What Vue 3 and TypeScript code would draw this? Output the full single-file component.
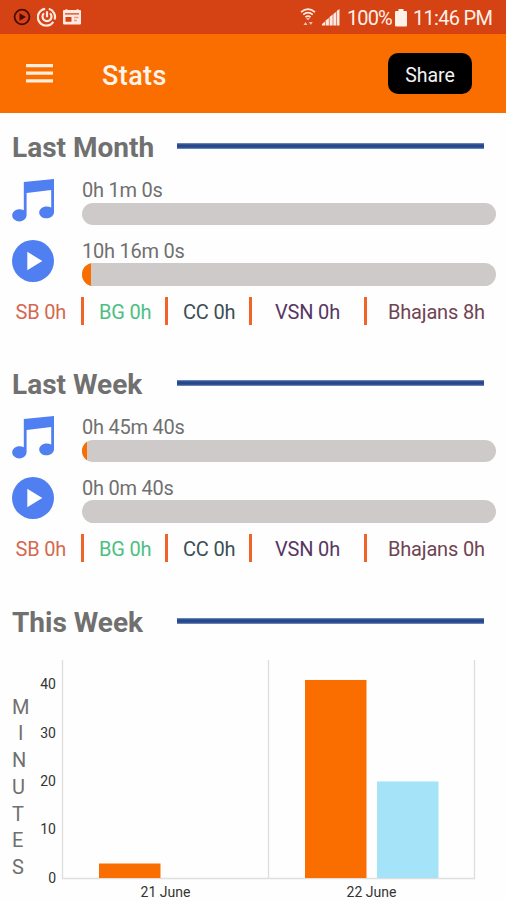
<script setup lang="ts">
interface Metric {
  kind: 'music' | 'play'
  time: string
  percent: number
}
interface Category {
  label: string
  tone: string
}
interface Period {
  title: string
  metrics: Metric[]
  categories: Category[]
}

const categories = (bhajans: string): Category[] => [
  { label: 'SB 0h', tone: 'sb' },
  { label: 'BG 0h', tone: 'bg' },
  { label: 'CC 0h', tone: 'cc' },
  { label: 'VSN 0h', tone: 'vsn' },
  { label: `Bhajans ${bhajans}`, tone: 'bhajans' },
]

const periods: Period[] = [
  {
    title: 'Last Month',
    metrics: [
      { kind: 'music', time: '0h 1m 0s', percent: 0 },
      { kind: 'play', time: '10h 16m 0s', percent: 2.1 },
    ],
    categories: categories('8h'),
  },
  {
    title: 'Last Week',
    metrics: [
      { kind: 'music', time: '0h 45m 40s', percent: 1.1 },
      { kind: 'play', time: '0h 0m 40s', percent: 0 },
    ],
    categories: categories('0h'),
  },
]

const axisLetters = 'MINUTES'.split('')
const ticks = [0, 10, 20, 30, 40]
const days = [
  { label: '21 June', listened: 3, watched: 0 },
  { label: '22 June', listened: 41, watched: 20 },
]

const baseline = 218
const unit = 4.83
const dayWidth = 206
const plotLeft = 27
</script>

<template>
  <main class="screen">
    <div class="status">
      <div class="status-left">
        <svg class="s-play" viewBox="0 0 18 18"><circle cx="9" cy="9" r="7.4" /><path d="M6.5 5.2 13 9l-6.5 3.8z" /></svg>
        <svg class="s-power" viewBox="0 0 20 20">
          <path d="M11.8 1.800A8.400 8.400 0 0 1 17.600 12.500M16.300 14.800A8.400 8.400 0 1 1 8.200 1.800M7 6.200a4.500 4.500 0 1 0 6 0M10 4.300v6" />
        </svg>
        <svg class="s-news" viewBox="0 0 18 16">
          <path class="sheet" d="M1 1h1.500V.3h2V1h9V.3h2V1H17q1 0 1 1v12.500q0 1-1 1H1q-1 0-1-1V2q0-1 1-1z" /><path class="cut" d="M2 4.300h14v1.200H2zM2.500 8h6v4.800h-6z" /><path class="fold" d="M11 8.500h4.500M11 11.500h3" />
        </svg>
      </div>
      <div class="status-right">
        <svg class="s-wifi" viewBox="0 0 16 18">
          <path class="arc" d="M1 4.200Q8-1.800 15 4.200M3.200 6.700Q8 2.700 12.800 6.700M5.400 9.100Q8 7.100 10.600 9.100" />
          <path class="dot" d="M6 10h4L8 12.500zM3.500 17l2-3 2 3zM8.800 14h4l-2 3z" />
        </svg>
        <svg class="s-signal" viewBox="0 0 18 18"><path d="M0 17.500v-1.500l3-2.500v4zM3.600 17.500v-5L6.900 10v7.500zM7.500 17.500V9l3.200-2.400v10.900zM11.300 17.500V6l2.800-2v13.500zM14.700 17.500V3L17.500 1v16.500z" /></svg>
        <span class="charge">100%</span>
        <svg class="s-battery" viewBox="0 0 12 18"><path d="M3.500 0h5v2H11q1 0 1 1v13.500q0 1-1 1H1q-1 0-1-1V3q0-1 1-1h2.500z" /></svg>
        <span class="clock">11:46 PM</span>
      </div>
    </div>

    <header class="appbar">
      <svg class="menu" viewBox="0 0 27 19"><path d="M0 1.600h27M0 9.200h27M0 16.800h27" /></svg>
      <h1>Stats</h1>
      <button class="share" type="button">Share</button>
    </header>

    <section v-for="period in periods" :key="period.title" class="period">
      <div class="heading">
        <h2>{{ period.title }}</h2>
        <span class="rule"></span>
      </div>
      <div v-for="metric in period.metrics" :key="metric.kind" class="metric">
        <svg v-if="metric.kind === 'music'" class="icon" viewBox="0 0 42 43">
          <path d="M11.800 3 42 0V33c0 3.600-3.200 6.300-7.400 6.300-4.100 0-7.400-2.600-7.400-5.900s3.300-6 7.400-6c1.700 0 3.300.4 4.600 1.200V11L14.600 14v21.800c0 3.800-3.200 6.600-7 6.600-4.200 0-7.400-2.700-7.400-6.100s3.300-6.100 7.400-6.100c1.600 0 3 .3 4.200 1z" />
        </svg>
        <svg v-else class="icon" viewBox="0 0 42 43">
          <circle cx="21" cy="21" r="21" /><path class="triangle" d="M15.300 11.800v18.400L30.300 21z" />
        </svg>
        <div class="progress">
          <span class="time">{{ metric.time }}</span>
          <div class="track"><div class="fill" :style="{ width: metric.percent + '%' }"></div></div>
        </div>
      </div>
      <div class="categories">
        <span v-for="item in period.categories" :key="item.tone" :class="['category', item.tone]">{{ item.label }}</span>
      </div>
    </section>

    <section class="period week">
      <div class="heading">
        <h2>This Week</h2>
        <span class="rule"></span>
      </div>
      <div class="chart-row">
        <div class="axis-name">
          <span v-for="letter in axisLetters" :key="letter" :class="{ narrow: letter === 'I' }">{{ letter }}</span>
        </div>
        <svg class="chart" viewBox="0 0 460 240">
          <path class="grid" :d="`M${plotLeft - 0.5} 0V${baseline + 0.5}H438.500V0M232.500 0V${baseline}`" />
          <text v-for="tick in ticks" :key="tick" class="tick" x="20" :y="baseline + 4.500 - tick * unit">{{ tick }}</text>
          <g v-for="(day, index) in days" :key="day.label">
            <rect class="listened" :x="plotLeft + 36 + index * dayWidth" :y="baseline - day.listened * unit" width="61.500" :height="day.listened * unit" />
            <rect class="watched" :x="plotLeft + 108 + index * dayWidth" :y="baseline - day.watched * unit" width="61.500" :height="day.watched * unit" />
            <text class="day" :x="plotLeft + 102.500 + index * dayWidth" y="236.500">{{ day.label }}</text>
          </g>
        </svg>
      </div>
    </section>
  </main>
</template>

<style>
body {
  margin: 0;
  overflow: hidden;
}
</style>

<style scoped>
.screen {
  width: 506px;
  height: 900px;
  overflow: hidden;
  background: #fefefe;
  font-family: Roboto, "Liberation Sans", sans-serif;
  color: #707070;
}
svg {
  display: block;
  flex: none;
}
.status {
  height: 34px;
  box-sizing: border-box;
  padding: 0 14px 0 13px;
  display: flex;
  align-items: center;
  justify-content: space-between;
  background: #d54214;
  color: #fff0e8;
}
.status-left,
.status-right {
  display: flex;
  align-items: center;
}
.status-left {
  gap: 6px;
}
.s-play {
  width: 18px;
  height: 18px;
  fill: #4a0c00;
}
.s-play circle {
  fill: none;
  stroke: #4a0c00;
  stroke-width: 1.8;
}
.s-power {
  width: 20px;
  height: 20px;
  fill: none;
  stroke: #ffe9e3;
  stroke-width: 2.2;
}
.s-news {
  width: 18px;
  height: 16px;
}
.sheet {
  fill: #ffe9e3;
}
.cut {
  fill: #d54214;
}
.fold {
  stroke: #e99a80;
  stroke-width: 1.5;
}
.s-wifi {
  width: 16px;
  height: 18px;
  margin-right: 6px;
}
.arc {
  fill: none;
  stroke: #ffe9e3;
  stroke-width: 1.7;
}
.dot {
  fill: #f7c0aa;
}
.s-signal {
  width: 18px;
  height: 18px;
  margin-right: 7px;
  fill: #ffe9e3;
}
.charge,
.clock {
  font-size: 20px;
  line-height: 34px;
  white-space: nowrap;
  padding-top: 2px;
}
.charge {
  width: 44px;
  letter-spacing: -0.9px;
}
.s-battery {
  width: 12px;
  height: 18px;
  margin: 1px 6px 0 4px;
  fill: #fff0e8;
}
.clock {
  width: 79px;
  letter-spacing: -0.7px;
}
.appbar {
  height: 79px;
  box-sizing: border-box;
  padding: 0 34px 0 26px;
  display: flex;
  align-items: center;
  background: #fa6e00;
}
.menu {
  width: 27px;
  height: 19px;
  stroke: #ffeedd;
  stroke-width: 3.2;
}
h1 {
  margin: 4px 0 0 49px;
  flex: 1;
  font-size: 27px;
  font-weight: 500;
  letter-spacing: 0.4px;
  line-height: 32px;
  color: #fff4ec;
}
.share {
  width: 84px;
  height: 41px;
  padding: 4px 0 0;
  border: 0;
  border-radius: 10px;
  background: #000;
  color: #f2f2f2;
  font: 400 19.500px/38px Roboto, "Liberation Sans", sans-serif;
}
.period {
  height: 237.300px;
  box-sizing: border-box;
  padding: 17px 10px 0 12px;
}
.heading {
  height: 34px;
  display: flex;
  align-items: center;
}
h2 {
  width: 165px;
  margin: 2px 0 0;
  font-size: 28px;
  font-weight: 700;
  line-height: 34px;
}
.rule {
  width: 307px;
  height: 6px;
  margin-top: -2px;
  background: linear-gradient(#7f97c1, #25478c 30%, #25478c 70%, #7f97c1);
}
.metric {
  display: flex;
  height: 60.500px;
  box-sizing: border-box;
  padding-top: 15px;
}
.icon {
  width: 42px;
  height: 43px;
  margin-right: 28px;
  fill: #507ff1;
}
.triangle {
  fill: #fff;
}
.progress {
  flex: 1;
}
.time {
  display: block;
  height: 23.500px;
  font-size: 20px;
  letter-spacing: -0.25px;
  line-height: 23.500px;
}
.track {
  width: 413.500px;
  height: 22.500px;
  border-radius: 12px;
  background: #cdcac9;
  overflow: hidden;
}
.fill {
  height: 100%;
  background: #fa6e00;
}
.categories {
  display: grid;
  grid-template-columns: 69px 84px 84px 115px 132px;
  height: 28px;
  margin-top: 12px;
}
.category {
  padding-left: 15.500px;
  font-size: 20px;
  letter-spacing: -0.18px;
  line-height: 30px;
  height: 28px;
  border-left: 3px solid #f0632a;
  box-sizing: border-box;
  white-space: nowrap;
}
.category.sb {
  border-left: 0;
  padding-left: 3.500px;
  color: #d4694e;
}
.bg {
  color: #4cc083;
  padding-left: 15px;
}
.cc {
  color: #3b4e55;
  padding-left: 15px;
}
.vsn {
  padding-left: 23px;
  color: #573663;
}
.bhajans {
  padding-left: 21px;
  color: #704453;
}
.week {
  height: 313px;
}
.chart-row {
  display: flex;
  margin-top: 21.400px;
}
.axis-name {
  flex: none;
  width: 24px;
  padding-top: 33.600px;
  display: flex;
  flex-direction: column;
}
.axis-name span {
  height: 26.750px;
  font-size: 20px;
  line-height: 26.750px;
}
.narrow {
  padding-left: 6px;
}
.chart {
  width: 460px;
  height: 240px;
  font-family: Roboto, "Liberation Sans", sans-serif;
}
.grid {
  fill: none;
  stroke: #dedede;
  stroke-width: 1.3;
}
.tick,
.day {
  fill: #333;
  font-size: 14px;
}
.tick {
  text-anchor: end;
}
.day {
  text-anchor: middle;
}
.listened {
  fill: #fa6e00;
}
.watched {
  fill: #a5e4f8;
}
</style>
